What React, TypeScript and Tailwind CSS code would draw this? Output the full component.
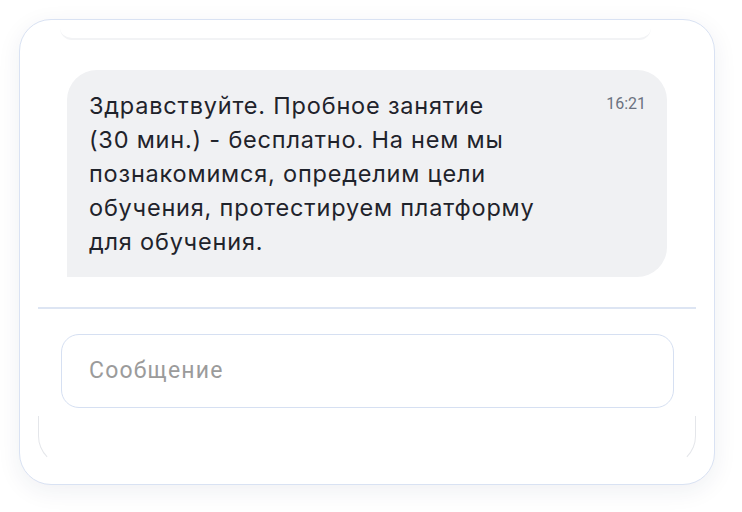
import React from "react";

export default function App() {
  return (
    <div className="w-[742px] h-[512px] bg-white p-[19px] font-['Inter',sans-serif]">
      {/* Chat card */}
      <div className="w-[696px] h-[466px] rounded-[32px] border-[1.5px] border-[#d9e2f3] bg-white shadow-[0_6px_24px_rgba(30,40,80,0.07)] px-[18px] flex flex-col">
        {/* tail of previous item */}
        <div className="ml-[22px] mr-[45px] h-[20px] rounded-b-[12px] border-b-[2px] border-[#f2f3f5]" />

        {/* Message bubble */}
        <div className="mt-[30px] mx-[29px] h-[207px] bg-[#f0f1f3] rounded-t-[30px] rounded-br-[30px] pl-[22px] pr-[21px] pt-[19px] flex justify-between">
          <p className="text-[23.5px] leading-[34px] text-[#1f232b] tracking-[0.8px]">
            Здравствуйте. Пробное занятие
            <br />
            (30 мин.) - бесплатно. На нем мы
            <br />
            познакомимся, определим цели
            <br />
            обучения, протестируем платформу
            <br />
            для обучения.
          </p>
          <span className="mt-[6px] text-[16px] leading-[18px] text-[#6b7180] font-['Roboto',sans-serif]">
            16:21
          </span>
        </div>

        {/* Divider */}
        <div className="mt-[30px] h-[2px] bg-[#dde5f3]" />

        {/* Input */}
        <div className="mt-[25px] ml-[23px] mr-[22px] h-[74px] rounded-[18px] border-[1.5px] border-[#d6e0f2] flex items-center pl-[27px] pr-[20px]">
          <span className="text-[23px] tracking-[1.2px] text-[#9b9b9b] font-['Roboto',sans-serif]">Сообщение</span>
        </div>

        {/* bottom of inner container */}
        <div className="mt-[8px] h-[50px] rounded-b-[30px] border-x border-b border-[#e4e6ea] border-b-transparent" />
      </div>
    </div>
  );
}
